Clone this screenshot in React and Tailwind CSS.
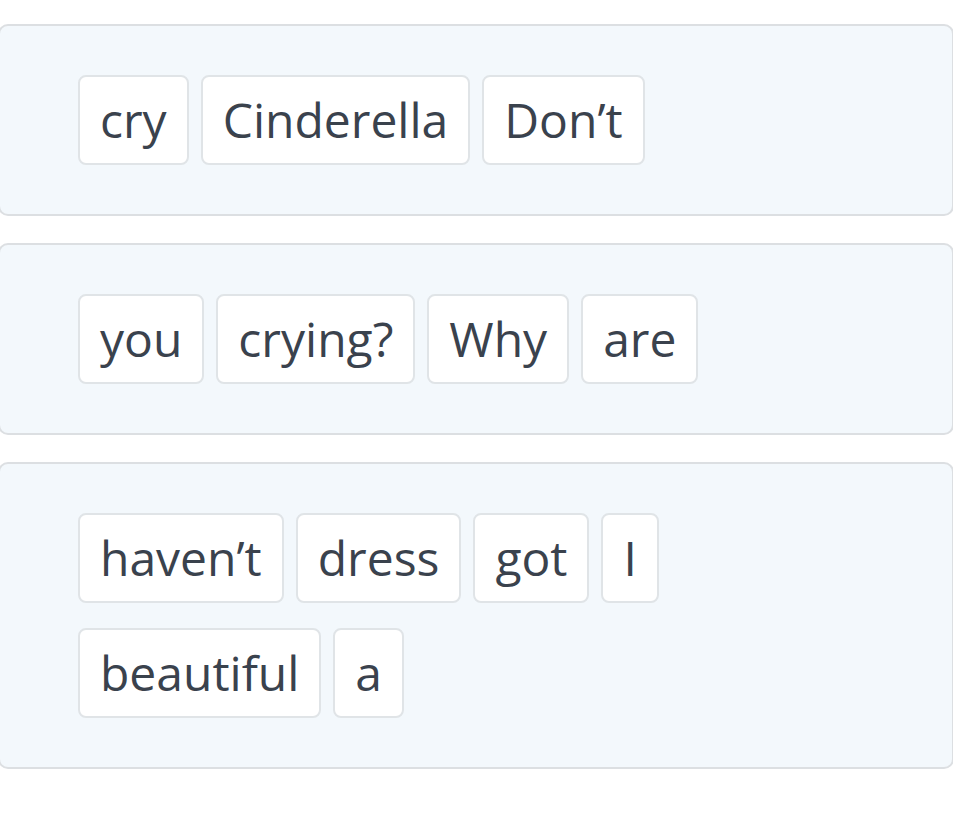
import React from 'react';

const rows = [
  [['cry', 'Cinderella', 'Don’t']],
  [['you', 'crying?', 'Why', 'are']],
  [['haven’t', 'dress', 'got', 'I'], ['beautiful', 'a']],
];

const Chip = ({ word }) => (
  <div className="rounded-[8px] border-2 border-[#e0e4e7] bg-white px-[20px] py-[15px] text-[48px] leading-[56px] text-[#3a424d]">
    {word}
  </div>
);

export default function App() {
  return (
    <div className="min-h-screen bg-white pt-[24px] font-['Open_Sans',sans-serif]">
      <div className="ml-[-2px] flex w-[956px] flex-col gap-[27px]">
        {rows.map((lines, i) => (
          <div
            key={i}
            className="flex flex-col gap-[25px] rounded-[10px] border-2 border-[#dcdfe2] bg-[#f3f8fc] py-[49px] pl-[78px]"
          >
            {lines.map((words, j) => (
              <div key={j} className="flex gap-[12px]">
                {words.map((w) => (
                  <Chip key={w} word={w} />
                ))}
              </div>
            ))}
          </div>
        ))}
      </div>
    </div>
  );
}
